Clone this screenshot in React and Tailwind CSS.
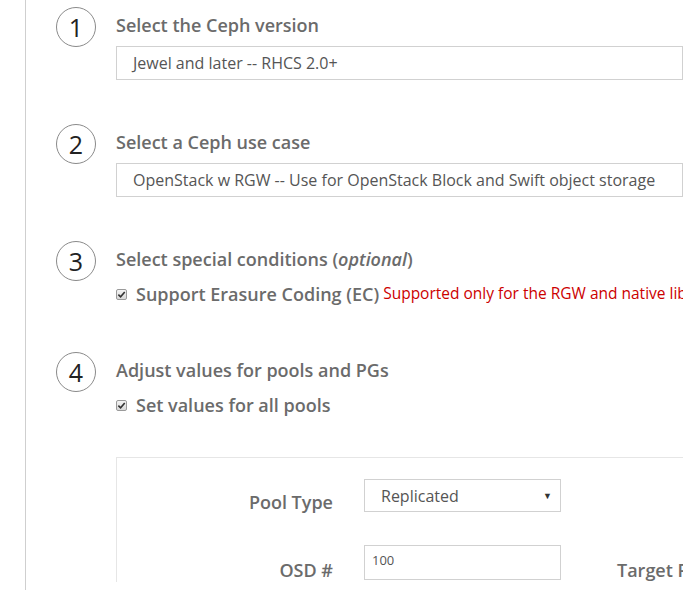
const font = { fontFamily: '"Open Sans", "Noto Sans", sans-serif' };

const StepCircle = ({ n }) => (
  <div className="w-10 h-10 shrink-0 rounded-full border border-[#8a8a8a] flex items-center justify-center text-[25px] text-[#222] leading-none">
    {n}
  </div>
);

const Check = () => (
  <span className="inline-flex w-[11px] h-[11px] shrink-0 items-center justify-center rounded-[2px] border border-[#9a9a9a] bg-gradient-to-b from-[#f4f4f4] to-[#d8d8d8]">
    <svg viewBox="0 0 10 10" className="w-[9px] h-[9px]">
      <path d="M1.5 5.2 L4 7.6 L8.6 2.2" fill="none" stroke="#333" strokeWidth="1.8" />
    </svg>
  </span>
);

const Heading = ({ children }) => (
  <div className="text-[18px] leading-6 font-semibold text-[#6b6b6b] whitespace-nowrap">{children}</div>
);

const SelectBox = ({ children }) => (
  <div className="mt-[9px] h-[34px] border border-[#d1d1d1] flex items-center pl-4 text-[16px] text-[#555] whitespace-nowrap">
    {children}
  </div>
);

const CheckRow = ({ label, note, className }) => (
  <div className={`flex items-center h-6 whitespace-nowrap ${className}`}>
    <Check />
    <span className="ml-[9px] text-[18px] font-semibold text-[#6b6b6b]">{label}</span>
    {note && <span className="ml-1 text-[15.5px] text-[#cc0000]">{note}</span>}
  </div>
);

export default function App() {
  return (
    <div style={font} className="flex h-[590px] overflow-hidden bg-white">
      <div className="w-[25px] shrink-0" />
      <div className="flex-1 min-w-0 border-l border-[#cfcfcf] pl-[30px] pt-[7px] overflow-hidden">
        <div className="flex gap-5 mb-[44px]">
          <StepCircle n={1} />
          <div className="flex-1 min-w-0 pt-[6px]">
            <Heading>Select the Ceph version</Heading>
            <SelectBox>Jewel and later -- RHCS 2.0+</SelectBox>
          </div>
        </div>

        <div className="flex gap-5 mb-[44px]">
          <StepCircle n={2} />
          <div className="flex-1 min-w-0 pt-[6px]">
            <Heading>Select a Ceph use case</Heading>
            <SelectBox>OpenStack w RGW -- Use for OpenStack Block and Swift object storage</SelectBox>
          </div>
        </div>

        <div className="flex gap-5 mb-[46px]">
          <StepCircle n={3} />
          <div className="flex-1 min-w-0 pt-[6px]">
            <Heading>
              Select special conditions (<i>optional</i>)
            </Heading>
            <CheckRow
              className="mt-[11px]"
              label="Support Erasure Coding (EC)"
              note="Supported only for the RGW and native librados use cases"
            />
          </div>
        </div>

        <div className="flex gap-5">
          <StepCircle n={4} />
          <div className="flex-1 min-w-0 pt-[6px]">
            <Heading>Adjust values for pools and PGs</Heading>
            <CheckRow className="mt-[11px]" label="Set values for all pools" />

            <div className="mt-[40px] border-t border-l border-[#e6e6e6] pt-[21px] w-[700px]">
              <div className="flex items-start">
                <div className="w-[216px] text-right pt-[11px] text-[18px] leading-6 font-semibold text-[#6b6b6b]">Pool Type</div>
                <div className="ml-[31px] w-[197px] h-[33px] border border-[#d1d1d1] flex items-center pl-4 pr-2 text-[16px] text-[#555]">
                  <span className="flex-1">Replicated</span>
                  <span className="text-[9px] text-[#333]">▼</span>
                </div>
              </div>
              <div className="flex items-start mt-[31px]">
                <div className="w-[216px] text-right pt-[13px] text-[18px] leading-6 font-semibold text-[#6b6b6b]">OSD #</div>
                <div className="ml-[31px] w-[197px] h-[35px] border border-[#d1d1d1] flex items-center pl-[7px] pb-[4px] text-[13px] text-[#555]">
                  100
                </div>
                <div className="ml-[56px] pt-[13px] text-[18px] leading-6 font-semibold text-[#6b6b6b] whitespace-nowrap">Target PGs per OSD</div>
              </div>
            </div>
          </div>
        </div>
      </div>
    </div>
  );
}
